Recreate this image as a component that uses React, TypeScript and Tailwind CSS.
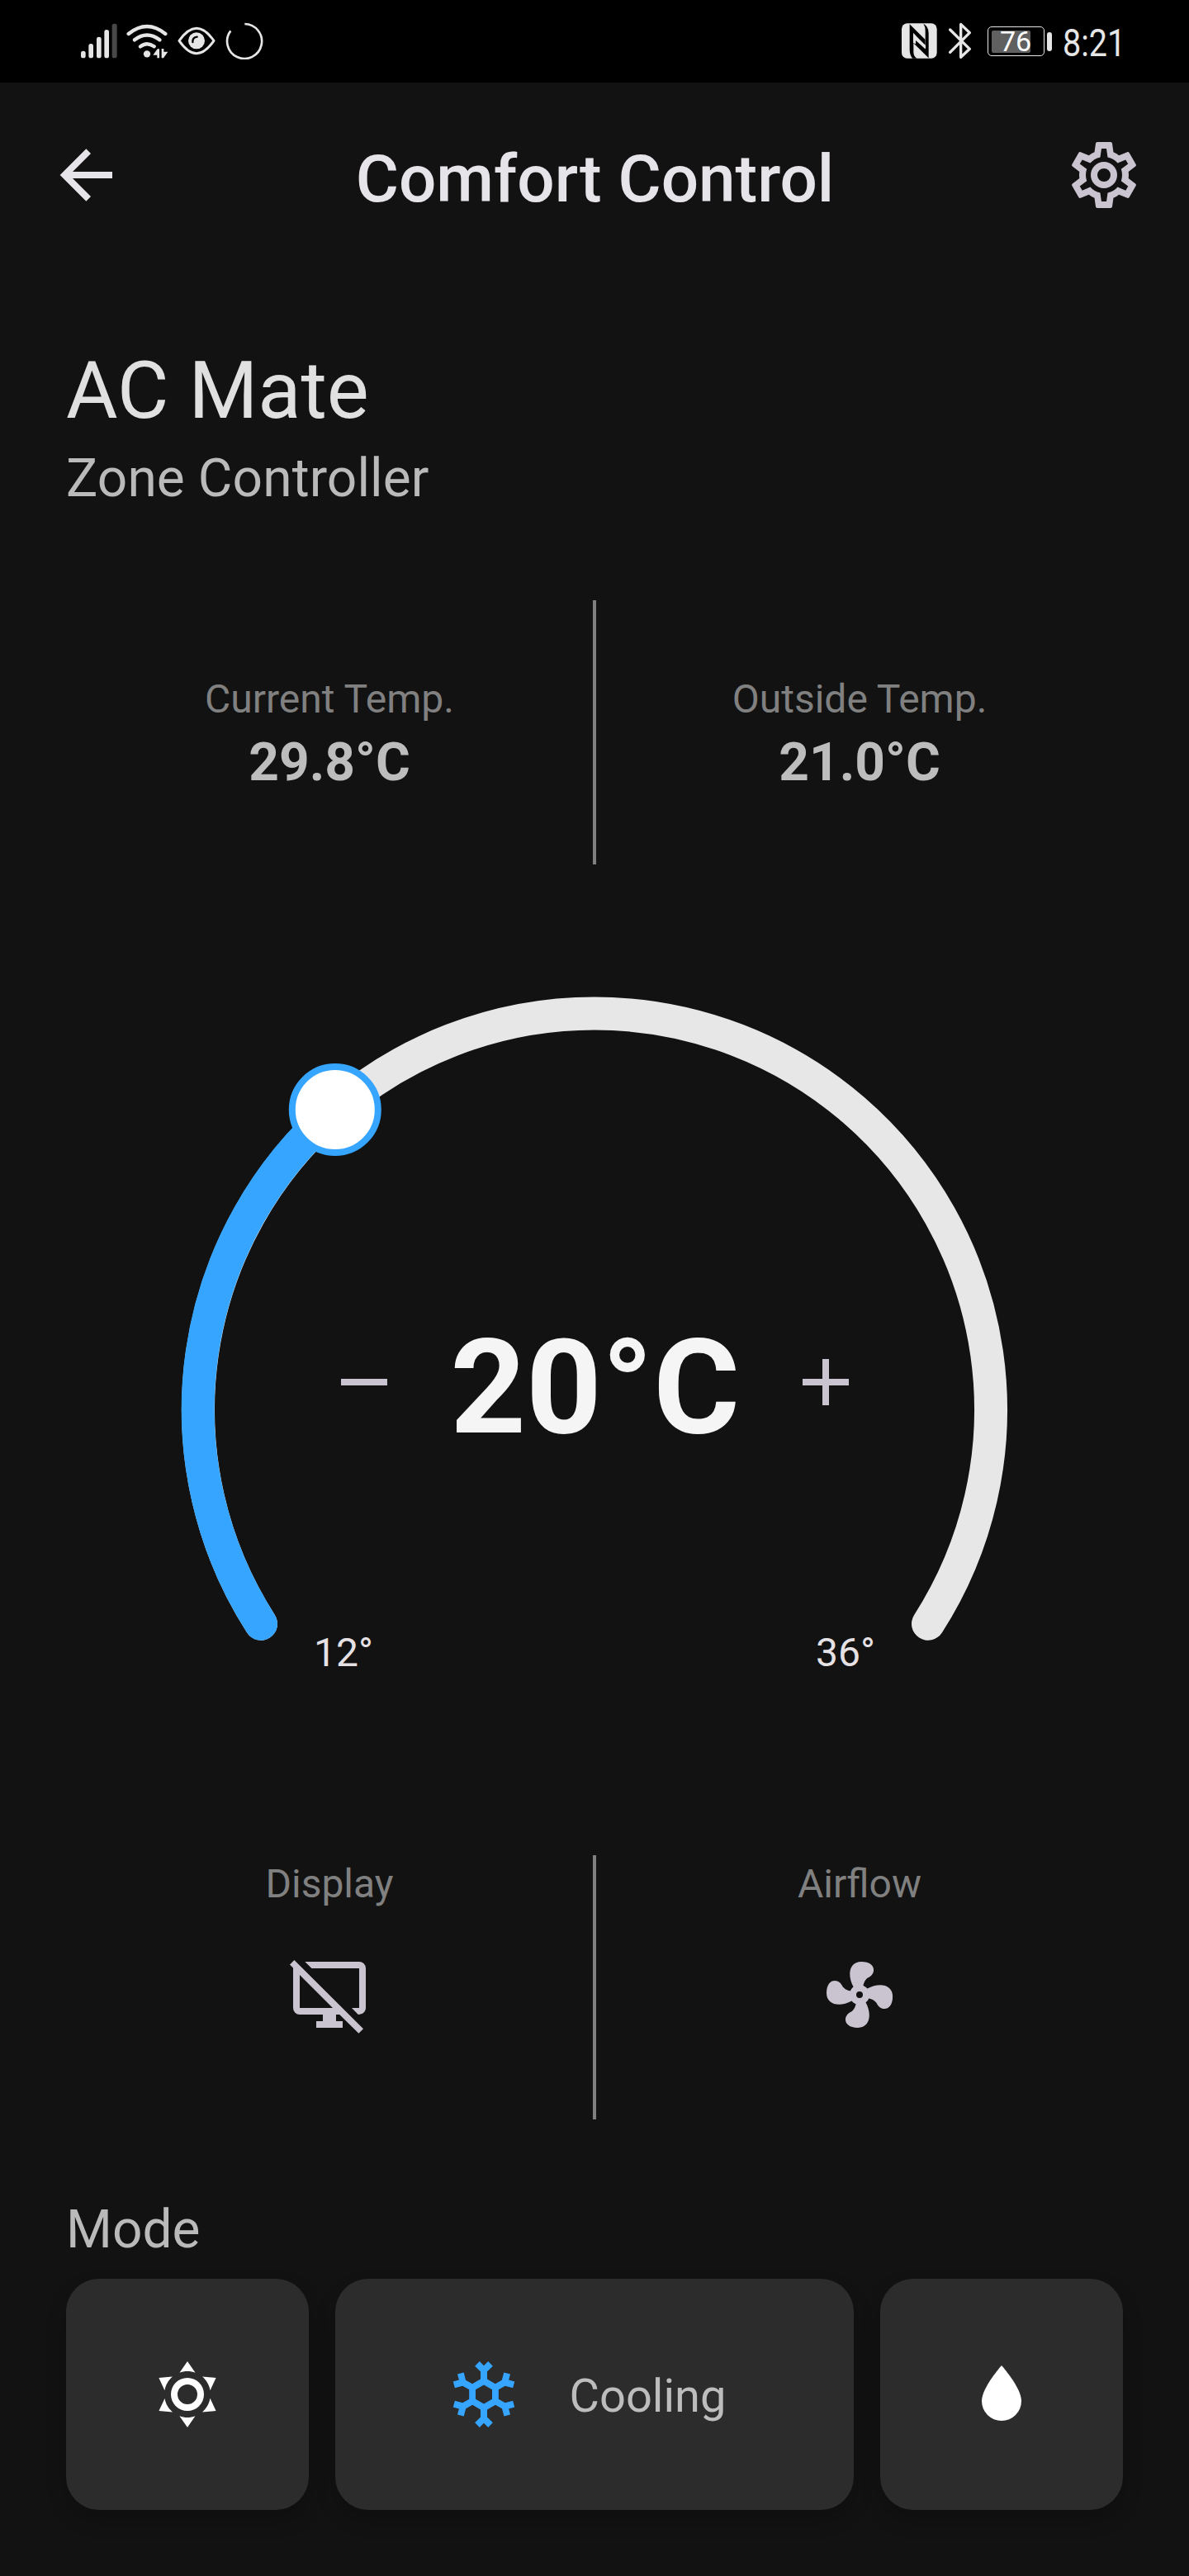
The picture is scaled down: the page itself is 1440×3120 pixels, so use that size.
import type { ReactNode } from 'react';

const paths = {
  back: 'M20,11V13H8L13.5,18.5L12.08,19.92L4.16,12L12.08,4.08L13.5,5.5L8,11H20Z',
  cog: 'M12,8A4,4 0 0,1 16,12A4,4 0 0,1 12,16A4,4 0 0,1 8,12A4,4 0 0,1 12,8M12,10A2,2 0 0,0 10,12A2,2 0 0,0 12,14A2,2 0 0,0 14,12A2,2 0 0,0 12,10M10,22C9.75,22 9.54,21.82 9.5,21.58L9.13,18.93C8.5,18.68 7.96,18.34 7.44,17.94L4.95,18.95C4.73,19.03 4.46,18.95 4.34,18.73L2.34,15.27C2.21,15.05 2.27,14.78 2.46,14.63L4.57,12.97L4.5,12L4.57,11L2.46,9.37C2.27,9.22 2.21,8.95 2.34,8.73L4.34,5.27C4.46,5.05 4.73,4.96 4.95,5.05L7.44,6.05C7.96,5.66 8.5,5.32 9.13,5.07L9.5,2.42C9.54,2.18 9.75,2 10,2H14C14.25,2 14.46,2.18 14.5,2.42L14.87,5.07C15.5,5.32 16.04,5.66 16.56,6.05L19.05,5.05C19.27,4.96 19.54,5.05 19.66,5.27L21.66,8.73C21.79,8.95 21.73,9.22 21.54,9.37L19.43,11L19.5,12L19.43,13L21.54,14.63C21.73,14.78 21.79,15.05 21.66,15.27L19.66,18.73C19.54,18.95 19.27,19.04 19.05,18.95L16.56,17.95C16.04,18.34 15.5,18.68 14.87,18.93L14.5,21.58C14.46,21.82 14.25,22 14,22H10M11.25,4L10.88,6.61C9.68,6.86 8.62,7.5 7.85,8.39L5.44,7.35L4.69,8.65L6.8,10.2C6.4,11.37 6.4,12.64 6.8,13.8L4.68,15.36L5.43,16.66L7.86,15.62C8.63,16.5 9.68,17.14 10.87,17.38L11.24,20H12.76L13.13,17.39C14.32,17.14 15.37,16.5 16.14,15.62L18.57,16.66L19.32,15.36L17.2,13.81C17.6,12.64 17.6,11.37 17.2,10.2L19.31,8.65L18.56,7.35L16.15,8.39C15.38,7.5 14.32,6.86 13.12,6.62L12.75,4H11.25Z',
  fan: 'M12,11A1,1 0 0,0 11,12A1,1 0 0,0 12,13A1,1 0 0,0 13,12A1,1 0 0,0 12,11M12.5,2C17,2 17.11,5.57 14.75,6.75C13.76,7.24 13.32,8.29 13.13,9.22C13.61,9.42 14.03,9.73 14.35,10.13C18.05,8.13 22.03,8.92 22.03,12.5C22.03,17 18.46,17.1 17.28,14.73C16.78,13.74 15.72,13.3 14.79,13.11C14.59,13.59 14.28,14 13.88,14.34C15.87,18.03 15.08,22 11.5,22C7,22 6.91,18.42 9.27,17.24C10.25,16.75 10.69,15.71 10.89,14.79C10.4,14.59 9.97,14.27 9.65,13.87C5.96,15.85 2,15.07 2,11.5C2,7 5.56,6.89 6.74,9.26C7.24,10.25 8.29,10.68 9.22,10.87C9.41,10.39 9.73,9.97 10.14,9.65C8.15,5.96 8.94,2 12.5,2Z',
  displayOff:
    'M4.6,2H21A2,2 0 0 1 23,4V16C23,17.1 22,18 20.7,18L18.75,16H21V4H6.6L4.6,2ZM0,2.87L1.35,1.5L22.25,22.3L20.85,23.7L15.05,18H14V20H16V22H8V20H10V18H3A2,2 0 0 1 1,16V3.87L0,2.87M3,6V16H13L3,6Z',
  minus: 'M19,13H5V11H19V13Z',
  plus: 'M19,13H13V19H11V13H5V11H11V5H13V11H19V13Z',
  sun: 'M12,7A5,5 0 0,1 17,12A5,5 0 0,1 12,17A5,5 0 0,1 7,12A5,5 0 0,1 12,7M12,9A3,3 0 0,0 9,12A3,3 0 0,0 12,15A3,3 0 0,0 15,12A3,3 0 0,0 12,9M12,2L14.39,5.42C13.65,5.15 12.84,5 12,5C11.16,5 10.35,5.15 9.61,5.42L12,2M3.34,7L7.5,6.65C6.9,7.16 6.36,7.78 5.94,8.5C5.5,9.24 5.25,10 5.11,10.79L3.34,7M3.36,17L5.12,13.23C5.26,14 5.53,14.78 5.95,15.5C6.37,16.24 6.91,16.86 7.5,17.37L3.36,17M20.65,7L18.88,10.79C18.74,10 18.47,9.23 18.05,8.5C17.63,7.78 17.1,7.15 16.5,6.64L20.65,7M20.64,17L16.5,17.36C17.09,16.85 17.62,16.22 18.04,15.5C18.46,14.77 18.73,14 18.87,13.21L20.64,17M12,22L9.59,18.56C10.33,18.83 11.14,19 12,19C12.82,19 13.63,18.83 14.37,18.56L12,22Z',
  snowflake:
    'M20.79,13.95L18.46,14.57L16.46,13.44V10.56L18.46,9.43L20.79,10.05L21.31,8.12L19.54,7.65L20,5.88L18.07,5.36L17.45,7.69L15.45,8.82L13,7.38V5.12L14.71,3.41L13.29,2L12,3.29L10.71,2L9.29,3.41L11,5.12V7.38L8.5,8.82L6.5,7.69L5.92,5.36L4,5.88L4.47,7.65L2.7,8.12L3.22,10.05L5.55,9.43L7.55,10.56V13.45L5.55,14.58L3.22,13.96L2.7,15.89L4.47,16.36L4,18.12L5.93,18.64L6.55,16.31L8.55,15.18L11,16.62V18.88L9.29,20.59L10.71,22L12,20.71L13.29,22L14.7,20.59L13,18.88V16.62L15.5,15.17L17.5,16.3L18.12,18.63L20,18.12L19.53,16.35L21.3,15.88L20.79,13.95M9.5,10.56L12,9.11L14.5,10.56V13.44L12,14.89L9.5,13.44V10.56Z',
  water: 'M12,20A6,6 0 0,1 6,14C6,10 12,3.25 12,3.25C12,3.25 18,10 18,14A6,6 0 0,1 12,20Z',
};

function Icon({ name, className = 'text-[#cac4d0]' }: { name: keyof typeof paths; className?: string }) {
  return (
    <svg viewBox="0 0 24 24" className={`size-24 shrink-0 ${className}`} fill="currentColor" aria-hidden="true">
      <path d={paths[name]} />
    </svg>
  );
}

function StatusBar() {
  return (
    <div className="flex h-[100px] items-start justify-between bg-black pl-[98px] pr-[80px] text-[#e6e6e6]">
      <div className="flex pt-[27px]">
        <svg viewBox="54 81 132 135" className="h-[45px] w-[44px]" fill="currentColor">
          <rect x="54" y="185" width="17" height="26" rx="8" />
          <rect x="82" y="159" width="17" height="52" rx="8" />
          <rect x="111" y="134" width="17" height="77" rx="8" />
          <rect x="139" y="108" width="17" height="103" rx="8" />
          <rect x="167" y="86" width="18" height="125" rx="8" fill="#484848" />
        </svg>
        <svg viewBox="219 81 156 135" className="ml-[11px] h-[45px] w-[52px]" fill="none" stroke="currentColor" strokeWidth="13" strokeLinecap="round">
          <path d="M227 123Q294 69 361 123M249 145Q294 110 340 145M270 169Q294 150 320 169" />
          <circle cx="294" cy="196" r="12.5" fill="currentColor" stroke="none" />
          <path d="M316 200L332 178H339V211H331V200ZM347 177H355V188H370L354 211H347Z" fill="currentColor" stroke="none" />
        </svg>
        <svg viewBox="405 81 138 135" className="ml-[10px] h-[45px] w-[46px]" fill="none" stroke="currentColor" strokeWidth="9">
          <path d="M411 148Q443 103 474 103T537 148Q505 194 474 194T411 148Z" strokeLinejoin="round" />
          <circle cx="474" cy="148" r="30" fill="currentColor" stroke="none" />
          <path d="M460 153Q459 136 476 134" stroke="#000" strokeWidth="7" strokeLinecap="round" />
        </svg>
        <svg viewBox="579 81 141 135" className="ml-3 h-[45px] w-[47px]" fill="none" stroke="currentColor" strokeWidth="8">
          <path d="M649 87A63 63 0 1 1 598 112" />
        </svg>
      </div>
      <div className="flex pt-[27px]">
        <svg viewBox="66 81 129 135" className="h-[45px] w-[43px]">
          <rect x="66" y="85" width="128" height="127" rx="20" fill="currentColor" />
          <path d="M95 88L151 143V178L109 136V190Q110 206 121 212H105Q95 200 95 180ZM109 157L164 211V120Q164 96 145 86Q152 96 152 112V178L109 120Z" fill="#000" />
          <path d="M108 120L153 165V178L117 147V160L108 156Z" fill="currentColor" />
        </svg>
        <svg viewBox="237 81 81 135" className="ml-[14px] h-[45px] w-[27px]" fill="none" stroke="currentColor" strokeWidth="10" strokeLinecap="round" strokeLinejoin="round">
          <path d="M242 108L313 178L281 208V88L313 119L242 190" />
        </svg>
        <div className="ml-5 mt-[5px] flex h-9 w-[69px] items-center rounded-[5px] border border-[#e6e6e6] p-[4px]">
          <div className="flex h-[27px] w-[47px] items-center rounded-[2px] bg-[#606060] pl-[10px] text-[34px] leading-none text-white">76</div>
        </div>
        <div className="ml-[3px] mt-3 h-[23px] w-[6px] rounded-full bg-[#e6e6e6]" />
        <div className="ml-[13px] w-[73px]">
          <div className="origin-left scale-x-[0.86] text-[46px] leading-[50px]">8:21</div>
        </div>
      </div>
    </div>
  );
}

function Column({ label, children }: { label: string; children: ReactNode }) {
  return (
    <div className="flex flex-1 flex-col items-center">
      <div className="text-[48px] leading-[56px] text-[#808080]">{label}</div>
      {children}
    </div>
  );
}

function Divider() {
  return <div className="h-80 w-1 shrink-0 bg-[#808080]" />;
}

function Dial() {
  return (
    <div className="mx-auto mt-[140px] grid h-[860px] w-[1040px]">
      <svg viewBox="200 1187 1040 860" className="col-start-1 row-start-1 h-[860px] w-[1040px]" fill="none" strokeWidth="40" strokeLinecap="round">
        <path d="M316 1966.7A480 480 0 1 1 1124 1966.7" stroke="#e7e7e7" />
        <path d="M316 1966.7A480 480 0 0 1 405.8 1344" stroke="#36a5ff" />
        <circle cx="405.8" cy="1344" r="52" fill="#fff" stroke="#36a5ff" strokeWidth="8" />
      </svg>
      <div className="col-start-1 row-start-1 flex flex-col pt-[387px]">
        <div className="flex items-center justify-between pl-[193px] pr-[192px]">
          <Icon name="minus" />
          <div className="pt-[13px] text-[160px] font-bold leading-[187px] text-[#f5f5f5]">20°C</div>
          <Icon name="plus" />
        </div>
        <div className="mt-[200px] flex justify-between px-[180px] text-[48px] leading-[56px] text-[#e6e1e5]">
          <span>12°</span>
          <span>36°</span>
        </div>
      </div>
    </div>
  );
}

const card = 'flex h-[280px] items-center justify-center rounded-[40px] bg-[#2c2c2c] shadow-[0_12px_24px_rgba(0,0,0,0.2)]';

export default function App() {
  return (
    <div className="flex h-[3120px] w-[1440px] flex-col overflow-hidden bg-[#121212] font-['Roboto',sans-serif]">
      <StatusBar />
      <header className="flex h-[224px] items-center justify-between pl-14 pr-[55px]">
        <Icon name="back" className="text-[#e6e4e8]" />
        <h1 className="pt-[9px] text-[80px] font-medium leading-[92px] text-[#e6e4e8]">Comfort Control</h1>
        <Icon name="cog" />
      </header>
      <section className="mt-[93px] px-20">
        <h2 className="text-[96px] leading-[112px] text-[#e0e0e0]">AC Mate</h2>
        <p className="mt-[13px] text-[64px] leading-[76px] tracking-[0.1px] text-[#bababa]">Zone Controller</p>
      </section>
      <section className="mt-[109px] flex h-80 px-20">
        <div className="flex flex-1 pt-[92px]">
          <Column label="Current Temp.">
            <div className="mt-[11px] text-[64px] font-bold leading-[76px] text-[#bdbdbd]">29.8°C</div>
          </Column>
        </div>
        <Divider />
        <div className="flex flex-1 pt-[92px]">
          <Column label="Outside Temp.">
            <div className="mt-[11px] text-[64px] font-bold leading-[76px] text-[#bdbdbd]">21.0°C</div>
          </Column>
        </div>
      </section>
      <Dial />
      <section className="mt-[200px] flex h-80 px-20">
        <div className="flex flex-1 pt-[7px]">
          <Column label="Display">
            <div className="mt-[58px]"><Icon name="displayOff" /></div>
          </Column>
        </div>
        <Divider />
        <div className="flex flex-1 pt-[7px]">
          <Column label="Airflow">
            <div className="mt-[58px]"><Icon name="fan" /></div>
          </Column>
        </div>
      </section>
      <h3 className="mt-24 px-20 text-[64px] leading-[76px] text-[#bababa]">Mode</h3>
      <section className="mt-[21px] flex gap-8 px-20">
        <div className={`${card} w-[294px]`}><Icon name="sun" className="text-white" /></div>
        <div className={`${card} flex-1 gap-14 pr-[23px]`}>
          <Icon name="snowflake" className="text-[#36a5ff]" />
          <span className="pt-1 text-[56px] leading-[66px] text-[#bdbdbd]">Cooling</span>
        </div>
        <div className={`${card} w-[294px]`}><Icon name="water" className="text-white" /></div>
      </section>
    </div>
  );
}
